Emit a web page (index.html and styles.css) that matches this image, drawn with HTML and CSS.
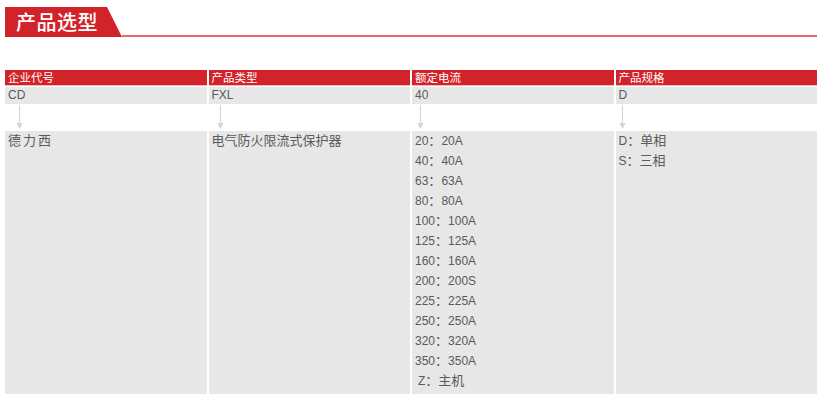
FILE: index.html
```html
<!DOCTYPE html>
<html lang="zh">
<head>
<meta charset="utf-8">
<title>产品选型</title>
<link rel="stylesheet" href="styles.css">
</head>
<body>
<div class="title-bar">
  <div class="tab"><span class="tab-text">产品选型</span></div>
  <div class="rule"></div>
</div>
<div class="table">
  <div class="h">企业代号</div>
  <div class="h">产品类型</div>
  <div class="h">额定电流</div>
  <div class="h">产品规格</div>

  <div class="v">CD</div>
  <div class="v">FXL</div>
  <div class="v">40</div>
  <div class="v">D</div>

  <div class="a a1"><svg width="7" height="25" viewBox="0 0 7 25"><line x1="3.5" y1="0" x2="3.5" y2="19" stroke="#d4d4d4" stroke-width="1"/><polygon points="0.5,18 6.5,18 3.5,24" fill="#d4d4d4"/></svg></div>
  <div class="a a2"><svg width="7" height="25" viewBox="0 0 7 25"><line x1="3.5" y1="0" x2="3.5" y2="19" stroke="#d4d4d4" stroke-width="1"/><polygon points="0.5,18 6.5,18 3.5,24" fill="#d4d4d4"/></svg></div>
  <div class="a a3"><svg width="7" height="25" viewBox="0 0 7 25"><line x1="3.5" y1="0" x2="3.5" y2="19" stroke="#d4d4d4" stroke-width="1"/><polygon points="0.5,18 6.5,18 3.5,24" fill="#d4d4d4"/></svg></div>
  <div class="a a4"><svg width="7" height="25" viewBox="0 0 7 25"><line x1="3.5" y1="0" x2="3.5" y2="19" stroke="#d4d4d4" stroke-width="1"/><polygon points="0.5,18 6.5,18 3.5,24" fill="#d4d4d4"/></svg></div>

  <div class="b"><div class="ln"><span class="cn wide">德力西</span></div></div>
  <div class="b"><div class="ln"><span class="cn">电气防火限流式保护器</span></div></div>
  <div class="b">
    <div class="ln">20<span class="cn">：</span>20A</div>
    <div class="ln">40<span class="cn">：</span>40A</div>
    <div class="ln">63<span class="cn">：</span>63A</div>
    <div class="ln">80<span class="cn">：</span>80A</div>
    <div class="ln">100<span class="cn">：</span>100A</div>
    <div class="ln">125<span class="cn">：</span>125A</div>
    <div class="ln">160<span class="cn">：</span>160A</div>
    <div class="ln">200<span class="cn">：</span>200S</div>
    <div class="ln">225<span class="cn">：</span>225A</div>
    <div class="ln">250<span class="cn">：</span>250A</div>
    <div class="ln">320<span class="cn">：</span>320A</div>
    <div class="ln">350<span class="cn">：</span>350A</div>
    <div class="ln indent">Z<span class="cn">：主机</span></div>
  </div>
  <div class="b">
    <div class="ln">D<span class="cn">：单相</span></div>
    <div class="ln">S<span class="cn">：三相</span></div>
  </div>
</div>
</body>
</html>
```

FILE: styles.css
```css
html, body {
  margin: 0;
  padding: 0;
  background: #ffffff;
}

body {
  font-family: "Liberation Sans", "Noto Sans CJK SC", sans-serif;
  font-size: 12px;
  color: #5a5a5a;
}

.title-bar {
  display: flex;
  align-items: flex-end;
  margin: 7px 4px 0 5px;
  height: 30px;
}

.tab {
  width: 117px;
  height: 30px;
  background: #d3232a;
  clip-path: polygon(0 0, 102px 0, 100% 100%, 0 100%);
  flex: none;
}

.tab-text {
  display: block;
  padding-left: 11px;
  line-height: 30px;
  font-family: "Noto Sans CJK SC", sans-serif;
  font-size: 20px;
  font-weight: 500;
  color: #ffffff;
  letter-spacing: 0.5px;
}

.rule {
  flex: 1;
  height: 2px;
  background: #e46a6f;
}

.table {
  margin: 33px 4px 0 5px;
  display: grid;
  grid-template-columns: repeat(4, 1fr);
  column-gap: 2px;
}

.h {
  height: 15px;
  line-height: 15px;
  background: #d3232a;
  border-bottom: 1px solid #f2b9bb;
  color: #ffffff;
  font-family: "Noto Sans CJK SC", sans-serif;
  font-size: 11.5px;
  padding-left: 3px;
}

.v {
  margin-top: 1px;
  height: 17px;
  line-height: 17px;
  background: #e6e7e6;
  padding-left: 3px;
}

.a {
  height: 27px;
  padding-top: 1px;
  box-sizing: border-box;
}

.a svg {
  display: block;
}

.a1 svg { margin-left: 11px; }
.a2 svg { margin-left: 8px; }
.a3 svg { margin-left: 5px; }
.a4 svg { margin-left: 3px; }

.b {
  height: 263px;
  box-sizing: border-box;
  padding: 0 0 0 3px;
  background: #e6e7e6;
}

.ln {
  height: 20px;
  line-height: 20px;
  white-space: nowrap;
}

.cn {
  font-family: "Noto Sans CJK SC", sans-serif;
  font-size: 13px;
  line-height: 1;
}

.wide {
  letter-spacing: 2px;
}

.indent {
  padding-left: 3px;
}
```
